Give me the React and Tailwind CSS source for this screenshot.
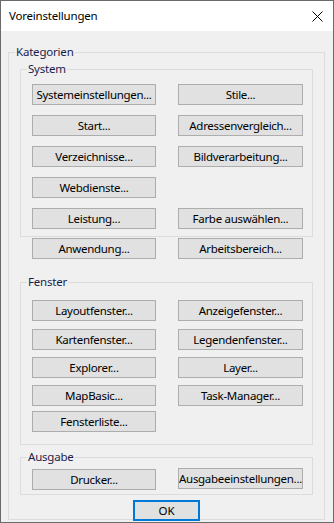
import React from 'react';

const SYSTEM_ROWS = [
  ['Systemeinstellungen...', 'Stile...'],
  ['Start...', 'Adressenvergleich...'],
  ['Verzeichnisse...', 'Bildverarbeitung...'],
  ['Webdienste...', null],
  ['Leistung...', 'Farbe auswählen...'],
];

const FENSTER_ROWS = [
  { items: ['Layoutfenster...', 'Anzeigefenster...'], mt: 'mt-0' },
  { items: ['Kartenfenster...', 'Legendenfenster...'], mt: 'mt-[8px]' },
  { items: ['Explorer...', 'Layer...'], mt: 'mt-[7px]' },
  { items: ['MapBasic...', 'Task-Manager...'], mt: 'mt-[7px]' },
  { items: ['Fensterliste...', null], mt: 'mt-[5px]' },
];

function Btn({ children, className = '' }) {
  return (
    <button
      type="button"
      className={`h-[21px] bg-[#e1e1e1] border border-[#adadad] text-[11.5px] tracking-[-0.3px] leading-[19px] text-black whitespace-nowrap text-center ${className}`}
    >
      {children}
    </button>
  );
}

function Row({ left, right, className = '' }) {
  return (
    <div className={`flex gap-[22px] ${className}`}>
      {left ? <Btn className="w-[124px]">{left}</Btn> : <div className="w-[124px]" />}
      {right ? <Btn className="w-[125px]">{right}</Btn> : <div className="w-[125px]" />}
    </div>
  );
}

// group box: border with caption sitting over the top line
function Group({ label, className = '', children }) {
  return (
    <div className={`relative border border-[#dcdcdc] ${className}`}>
      <span className="absolute -top-[9px] left-[6px] bg-[#f0f0f0] px-[1px] text-[11.5px] tracking-[-0.2px] leading-[16px] text-[#1c1c4c]">
        {label}
      </span>
      {children}
    </div>
  );
}

export default function App() {
  return (
    <div
      className="w-[334px] h-[523px] border border-[#6a6a6a] bg-[#f0f0f0] flex flex-col"
      style={{ fontFamily: '"Noto Sans", "Open Sans", sans-serif' }}
    >
      {/* title bar */}
      <div className="h-[30px] bg-white flex items-center justify-between pl-[8px] pr-[10px]">
        <span className="text-[11.5px] tracking-[-0.2px] text-black">Voreinstellungen</span>
        <svg width="11" height="11" viewBox="0 0 11 11" className="text-black">
          <path d="M0.5 0.5 L10.5 10.5 M10.5 0.5 L0.5 10.5" stroke="currentColor" strokeWidth="1" fill="none" />
        </svg>
      </div>

      <div className="flex-1 pt-[21px] pl-[7px]">
        <Group label="Kategorien" className="w-[317px] h-[468px] flex flex-col">
          <Group label="System" className="ml-[11px] mt-[16px] w-[293px] pt-[14px] pb-[7px] pl-[11px]">
            <div className="flex flex-col gap-[10px]">
              {SYSTEM_ROWS.map(([l, r]) => (
                <Row key={l} left={l} right={r} />
              ))}
            </div>
          </Group>

          <Row left="Anwendung..." right="Arbeitsbereich..." className="ml-[23px] mt-[1px]" />

          <Group label="Fenster" className="ml-[11px] mt-[23px] w-[293px] pt-[17px] pb-[12px] pl-[11px]">
            {FENSTER_ROWS.map(({ items, mt }) => (
              <Row key={items[0]} left={items[0]} right={items[1]} className={mt} />
            ))}
          </Group>

          <Group label="Ausgabe" className="ml-[11px] mt-[12px] w-[293px] pt-[10px] pb-[4px] pl-[11px]">
            <div className="flex gap-[22px] items-start">
              <Btn className="w-[124px] mt-[1px]">Drucker...</Btn>
              <Btn className="w-[125px]">Ausgabeeinstellungen...</Btn>
            </div>
          </Group>

          <div className="flex justify-center mt-[5px]">
            <button
              type="button"
              className="w-[67px] h-[21px] bg-[#e1e1e1] border-2 border-[#0078d7] text-[11.5px] leading-[17px] text-black"
            >
              OK
            </button>
          </div>
        </Group>
      </div>
    </div>
  );
}
